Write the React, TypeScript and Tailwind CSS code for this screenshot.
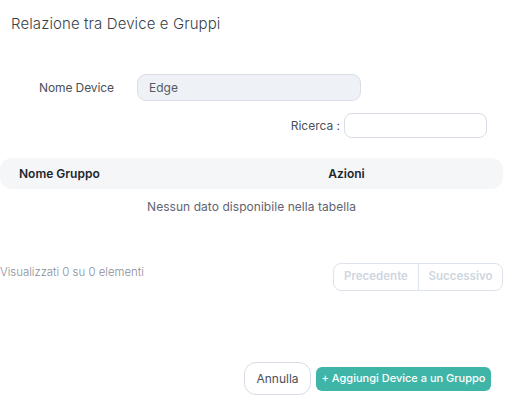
import React from "react";

export default function App() {
  return (
    <div
      className="w-[510px] h-[409px] bg-white overflow-hidden flex flex-col"
      style={{ fontFamily: "Inter, 'Noto Sans', sans-serif" }}
    >
      <div className="pl-[11px] pt-[14px] text-[15px] font-light text-[#3b3f4a] leading-[20px] tracking-[0.1px]">
        Relazione tra Device e Gruppi
      </div>

      <div className="mt-[40px] flex items-center">
        <div className="pl-[39px] w-[137px] text-[12px] text-[#4b505b] leading-[16px] tracking-[-0.1px]">Nome Device</div>
        <div className="w-[224px] h-[27px] rounded-[9px] border border-[#d9dee6] bg-[#eef1f5] flex items-center pl-[11px] text-[12px] text-[#555a66]">
          Edge
        </div>
      </div>

      <div className="mt-[12px] flex items-center justify-end pr-[23px]">
        <span className="text-[12px] text-[#4b505b] mr-[4px]">Ricerca :</span>
        <div className="w-[143px] h-[25px] rounded-[8px] border border-[#d9dee6] bg-white" />
      </div>

      <div className="mt-[20px] w-[503px] h-[31px] rounded-[12px] bg-[#f5f6f8] flex items-center text-[12px] font-semibold text-[#22262e]">
        <div className="w-[190px] pl-[19px]">Nome Gruppo</div>
        <div className="flex-1 text-center">Azioni</div>
      </div>
      <div className="w-[503px] text-center text-[12px] text-[#5f6470] mt-[10px] leading-[16px] tracking-[0.05px]">
        Nessun dato disponibile nella tabella
      </div>

      <div className="mt-[48px] w-[503px] flex items-center justify-between">
        <div className="text-[11.4px] font-light text-[#8a8f99] -mt-[8px]">Visualizzati 0 su 0 elementi</div>
        <div className="flex h-[28px] rounded-[8px] border border-[#dde3ea] overflow-hidden text-[11.5px] font-semibold text-[#cfd6e0]">
          <div className="w-[85px] flex items-center justify-center border-r border-[#dde3ea]">Precedente</div>
          <div className="w-[83px] flex items-center justify-center">Successivo</div>
        </div>
      </div>

      <div className="mt-[71px] flex items-center justify-end pr-[19px] gap-[5px]">
        <div className="w-[67px] h-[33px] rounded-[12px] border border-[#d7dde6] flex items-center justify-center text-[12px] text-[#4b505b]">
          Annulla
        </div>
        <div className="w-[175px] h-[24px] rounded-[6px] bg-[#3fb5a7] flex items-center justify-center text-[11px] font-medium text-white">
          + Aggiungi Device a un Gruppo
        </div>
      </div>
    </div>
  );
}
